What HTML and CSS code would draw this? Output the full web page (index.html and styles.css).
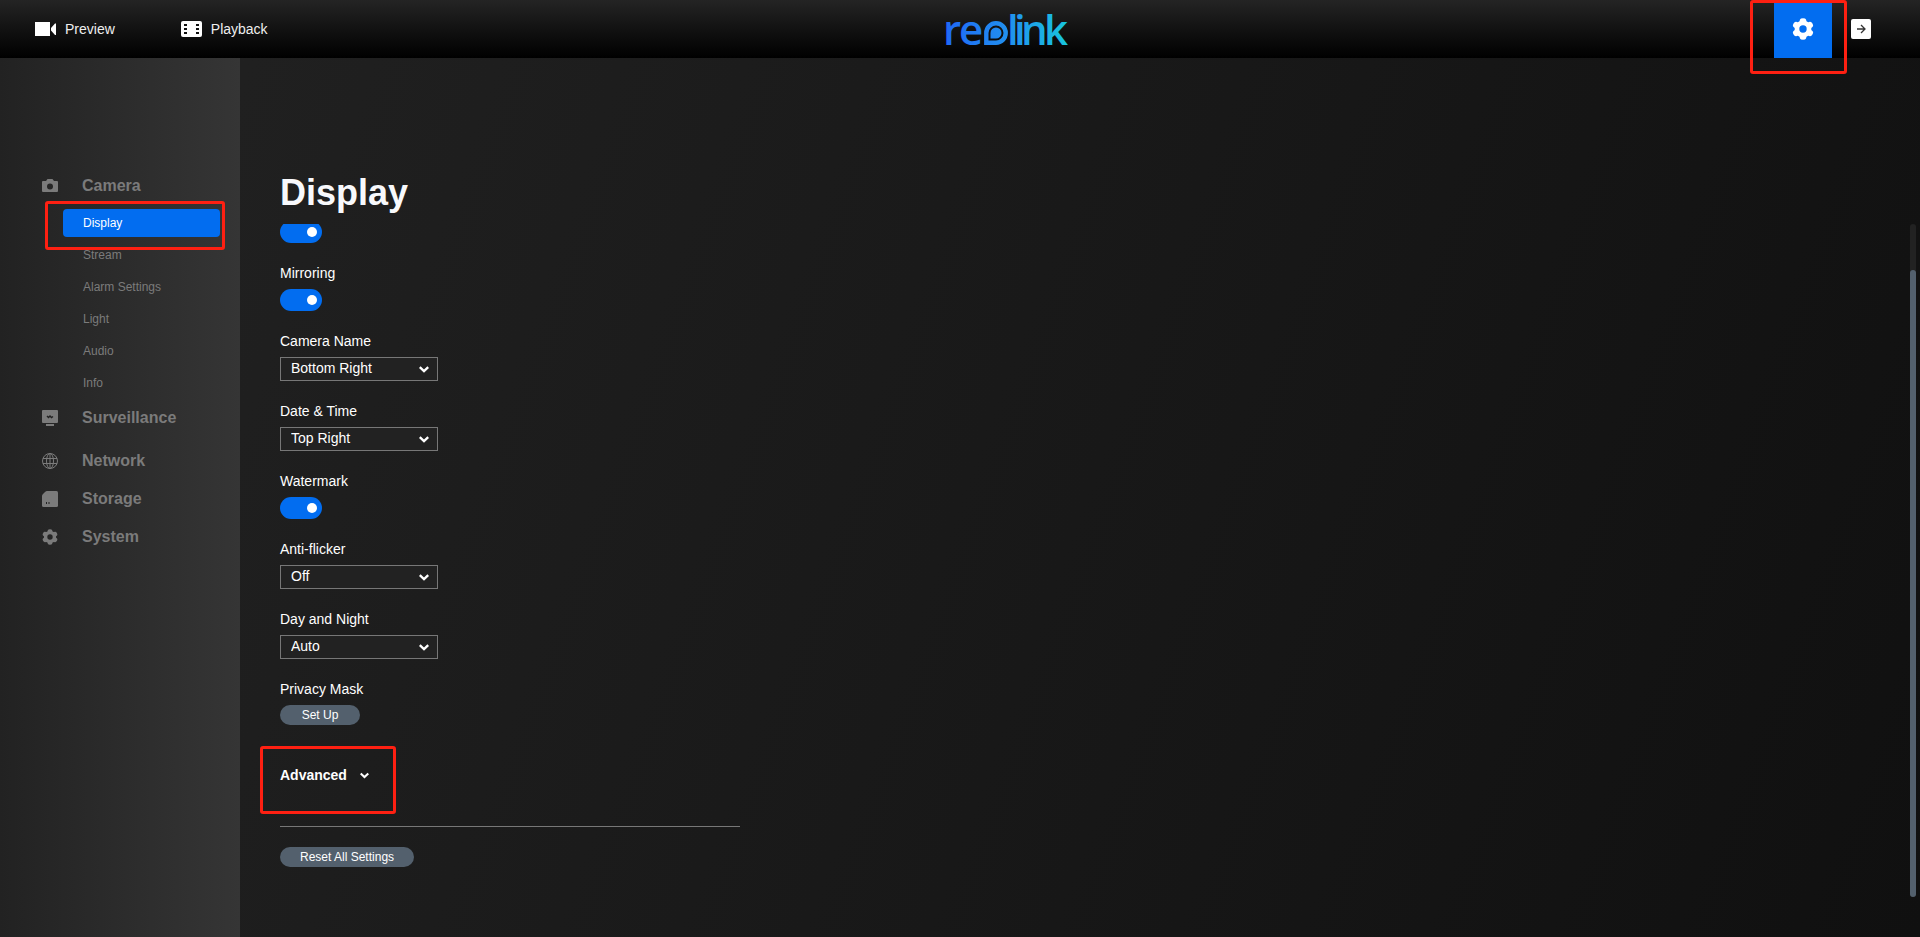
FILE: index.html
```html
<!DOCTYPE html>
<html lang="en">
<head>
<meta charset="utf-8">
<title>Reolink - Display</title>
<link rel="stylesheet" href="styles.css">
</head>
<body>
<svg class="defs" aria-hidden="true">
  <symbol id="gear" viewBox="0 0 22 22">
    <path fill="currentColor" fill-rule="evenodd" d="M8 1.600 Q8.500 .2 11 .2 Q13.500 .2 14 1.600 L14.500 3.300 L16.200 4.200 L17.900 3.700 Q19.400 3.500 20.600 5.700 Q21.700 7.800 20.700 8.800 L19.300 10.100 L19.300 11.900 L20.700 13.200 Q21.700 14.200 20.600 16.300 Q19.400 18.500 17.900 18.300 L16.200 17.800 L14.500 18.700 L14 20.400 Q13.500 21.800 11 21.800 Q8.500 21.800 8 20.400 L7.500 18.700 L5.800 17.800 L4.100 18.300 Q2.600 18.500 1.400 16.300 Q.3 14.200 1.300 13.200 L2.700 11.900 L2.700 10.100 L1.300 8.800 Q.3 7.800 1.400 5.700 Q2.600 3.500 4.100 3.700 L5.800 4.200 L7.500 3.300Z M11 7.300 a3.700 3.700 0 1 0 0 7.400 a3.700 3.700 0 1 0 0-7.400Z"/>
  </symbol>
  <symbol id="chevron" viewBox="0 0 10 7">
    <path d="M.8 1.200 L5 5.200 L9.200 1.200" fill="none" stroke="currentColor" stroke-width="2.300"/>
  </symbol>
</svg>

<header class="topbar">
  <nav class="topnav">
    <a class="toplink" href="#preview">
      <svg class="icon-top" viewBox="0 0 21 16"><path fill="#fff" d="M0 1h15v14H0zM16 7l4-4.500h1v11.500h-1l-4-4.500z"/></svg>
      Preview
    </a>
    <a class="toplink" href="#playback">
      <svg class="icon-top" viewBox="0 0 21 16"><rect width="21" height="16" rx="2" fill="#fff"/><path fill="#111" d="M2 3h4v2H2zM2 7h4v2H2zM2 11h4v2H2zM15 3h4v2h-4zM15 7h4v2h-4zM15 11h4v2h-4z"/><path fill="#fff" d="M2 3h1v10H2zM18 3h1v10h-1z"/></svg>
      Playback
    </a>
  </nav>
  <a class="logo" href="#home" aria-label="reolink">
    <svg viewBox="0 0 124 36">
      <defs>
        <linearGradient id="brand" gradientUnits="userSpaceOnUse" x1="0" y1="0" x2="124" y2="0">
          <stop offset="0" stop-color="#1f69f6"/><stop offset=".5" stop-color="#2190ef"/><stop offset="1" stop-color="#18c8dc"/>
        </linearGradient>
      </defs>
      <text class="wordmark" y="34" x="-3 13 61 68 75 98" fill="url(#brand)">relink</text>
      <path d="M40.300 31.700 V22 A9.700 9.700 0 1 1 50 31.700 Z" fill="none" stroke="url(#brand)" stroke-width="4.400"/>
      <path d="M44.500 27.500 V22 A5.500 5.500 0 1 1 50 27.500 Z" fill="url(#brand)"/>
    </svg>
  </a>
  <div class="topactions">
    <div class="marked">
      <button class="gear-btn" type="button" aria-label="Settings"><svg><use href="#gear"/></svg></button>
      <span class="mark mark-gear"></span>
    </div>
    <button class="exit-btn" type="button" aria-label="Log out">
      <svg viewBox="0 0 20 20"><rect width="20" height="20" rx="2" fill="#fff"/><path d="M6 10h8M10 6l4 4-4 4" fill="none" stroke="#333" stroke-width="1.300"/></svg>
    </button>
  </div>
</header>

<div class="body">
  <aside class="sidebar">
    <nav class="menu">
      <section class="group">
        <a class="head" href="#camera">
          <svg viewBox="0 0 16 16"><path fill="currentColor" fill-rule="evenodd" d="M1 3h3l1.500-2h5L12 3h3q1 0 1 1v9q0 1-1 1H1q-1 0-1-1V4q0-1 1-1zM8 5.400a3 3 0 1 0 0 6 3 3 0 1 0 0-6z"/></svg>
          Camera
        </a>
        <ul class="items">
          <li class="marked"><a class="item active" href="#display">Display</a><span class="mark mark-item"></span></li>
          <li><a class="item" href="#stream">Stream</a></li>
          <li><a class="item" href="#alarm">Alarm Settings</a></li>
          <li><a class="item" href="#light">Light</a></li>
          <li><a class="item" href="#audio">Audio</a></li>
          <li><a class="item" href="#info">Info</a></li>
        </ul>
      </section>
      <a class="head spaced" href="#surveillance">
        <svg viewBox="0 0 16 16"><path fill="currentColor" d="M1 0h14q1 0 1 1v11q0 1-1 1H1q-1 0-1-1V1q0-1 1-1zM4 14h8v2H4z"/><path d="M5 6l1.500 1.500L8 6l1.500 1.500L11 6.500" fill="none" stroke="#222" stroke-width="1.400"/></svg>
        Surveillance
      </a>
      <a class="head" href="#network">
        <svg viewBox="0 0 16 16" fill="none" stroke="currentColor"><circle cx="8" cy="8" r="7.500"/><ellipse cx="8" cy="8" rx="3.500" ry="7.500"/><path d="M8 .5v15M1 5.500h14M1 10.500h14"/></svg>
        Network
      </a>
      <a class="head" href="#storage">
        <svg viewBox="0 0 16 16"><path fill="currentColor" d="M5 0h9.500Q16 0 16 1.500v13q0 1.500-1.500 1.500h-13Q0 16 0 14.500V5q0-1 1-2l2-2q1-1 2-1z"/><path fill="#222" d="M4 11h1v2H4zM6.500 11h1v2h-1z"/></svg>
        Storage
      </a>
      <a class="head" href="#system">
        <svg><use href="#gear"/></svg>
        System
      </a>
    </nav>
  </aside>

  <main class="content">
    <h1>Display</h1>
    <div class="pane">
      <form class="settings">
        <div class="field">
          <input class="toggle" type="checkbox" checked aria-label="Flip">
        </div>
        <div class="field">
          <label for="mirror">Mirroring</label>
          <input class="toggle" id="mirror" type="checkbox" checked>
        </div>
        <div class="field">
          <label for="name">Camera Name</label>
          <span class="pick"><select id="name"><option>Bottom Right</option></select><svg><use href="#chevron"/></svg></span>
        </div>
        <div class="field">
          <label for="date">Date &amp; Time</label>
          <span class="pick"><select id="date"><option>Top Right</option></select><svg><use href="#chevron"/></svg></span>
        </div>
        <div class="field">
          <label for="watermark">Watermark</label>
          <input class="toggle" id="watermark" type="checkbox" checked>
        </div>
        <div class="field">
          <label for="flicker">Anti-flicker</label>
          <span class="pick"><select id="flicker"><option>Off</option></select><svg><use href="#chevron"/></svg></span>
        </div>
        <div class="field">
          <label for="daynight">Day and Night</label>
          <span class="pick"><select id="daynight"><option>Auto</option></select><svg><use href="#chevron"/></svg></span>
        </div>
        <div class="field">
          <label for="mask">Privacy Mask</label>
          <button class="pill" id="mask" type="button">Set Up</button>
        </div>
        <div class="marked advanced-row">
          <button class="advanced" type="button">Advanced <svg><use href="#chevron"/></svg></button>
          <span class="mark mark-advanced"></span>
        </div>
        <hr>
        <button class="pill" type="button">Reset All Settings</button>
      </form>
      <div class="track"><div class="thumb"></div></div>
    </div>
  </main>
</div>
</body>
</html>
```
FILE: styles.css
```css
* { box-sizing: border-box; }

body {
  margin: 0;
  min-height: 100vh;
  display: flex;
  flex-direction: column;
  background: #111;
  color: #fff;
  font: 14px/16px "Liberation Sans", Arial, sans-serif;
}

a { color: inherit; text-decoration: none; }
button { padding: 0; border: 0; background: none; color: inherit; font: inherit; cursor: pointer; }
svg { display: block; }
.defs { position: absolute; width: 0; height: 0; }

.topbar {
  display: grid;
  grid-template-columns: 1fr auto 1fr;
  height: 58px;
  background: linear-gradient(#242424, #000);
}
.topnav { display: flex; align-items: center; gap: 66px; padding-left: 35px; }
.toplink { display: flex; align-items: center; gap: 9px; color: #eee; }
.icon-top { width: 21px; height: 16px; }
.logo { align-self: center; padding-left: 96px; }
.logo svg { width: 124px; height: 36px; overflow: visible; }
.wordmark { font: 600 42px "Open Sans", "Noto Sans", sans-serif; }

.topactions { display: flex; justify-content: flex-end; align-items: center; gap: 19px; padding-right: 49px; }
.gear-btn { display: flex; align-items: center; justify-content: center; width: 58px; height: 58px; background: #026df0; }
.gear-btn svg { width: 22px; height: 22px; }
.exit-btn svg { width: 20px; height: 20px; }

.marked { position: relative; }
.mark { position: absolute; border: 3px solid #fe2012; border-radius: 3px; pointer-events: none; z-index: 2; }
.mark-gear { inset: 0 -15px -16px -24px; }
.mark-item { inset: -8px -5px -13px -18px; }
.mark-advanced { left: -20px; top: -21px; width: 136px; height: 68px; }

.body { flex: 1; display: flex; background: linear-gradient(110deg, #222, #101010); }

.sidebar { width: 240px; background: linear-gradient(90deg, #222, #353535); color: #7b7b7b; }
.menu { display: flex; flex-direction: column; gap: 16px; padding: 117px 20px 0 42px; }
.head { display: flex; align-items: center; gap: 24px; font-size: 16px; line-height: 22px; font-weight: bold; }
.head svg { width: 16px; height: 16px; }
.items { display: flex; flex-direction: column; gap: 4px; margin: 12px 0 0 21px; padding: 0; list-style: none; }
.item { display: block; padding-left: 20px; border-radius: 4px; font-size: 12px; line-height: 28px; }
.item.active { background: #026df0; color: #fff; }
.spaced { margin: -6px 0 5px; }

.content { flex: 1; display: flex; flex-direction: column; padding: 115px 4px 40px 40px; }
h1 { margin: 0; font-size: 36px; line-height: 40px; color: #f8f9fc; }
.pane { flex: 1; display: flex; justify-content: space-between; margin-top: 11px; overflow-x: visible; overflow-y: clip; }

.settings {
  display: flex;
  flex-direction: column;
  align-items: flex-start;
  width: 460px;
  margin: -3px 0 0;
}
.field { display: flex; flex-direction: column; align-items: flex-start; gap: 8px; margin-bottom: 22px; }

.toggle { appearance: none; display: flex; align-items: center; justify-content: flex-end; width: 42px; height: 22px; margin: 0; padding: 0 5px; border-radius: 11px; background: #026df0; }
.toggle::after { content: ""; width: 10px; height: 10px; border-radius: 50%; background: #fff; }

.pick { display: grid; width: 158px; height: 24px; }
.pick > * { grid-area: 1 / 1; }
.pick select { appearance: none; padding: 0 10px 2px; border: 1px solid #777; border-radius: 0; background: #222; color: #fff; font: inherit; }
.pick svg { place-self: center end; width: 10px; height: 7px; margin-right: 9px; pointer-events: none; }

.pill { height: 20px; padding: 0 20px; min-width: 80px; border-radius: 10px; background: #53606d; font-size: 12px; line-height: 20px; }

.advanced-row { margin-top: 20px; }
.advanced { display: flex; align-items: center; gap: 13px; font-weight: bold; }
.advanced svg { width: 9px; height: 7px; }
hr { width: 100%; margin: 43px 0 20px; border: 0; border-top: 1px solid #777; }

.track { width: 6px; border-radius: 3px; background: #222; padding-top: 46px; display: flex; }
.thumb { flex: 1; border-radius: 3px; background: #53606d; }
```
